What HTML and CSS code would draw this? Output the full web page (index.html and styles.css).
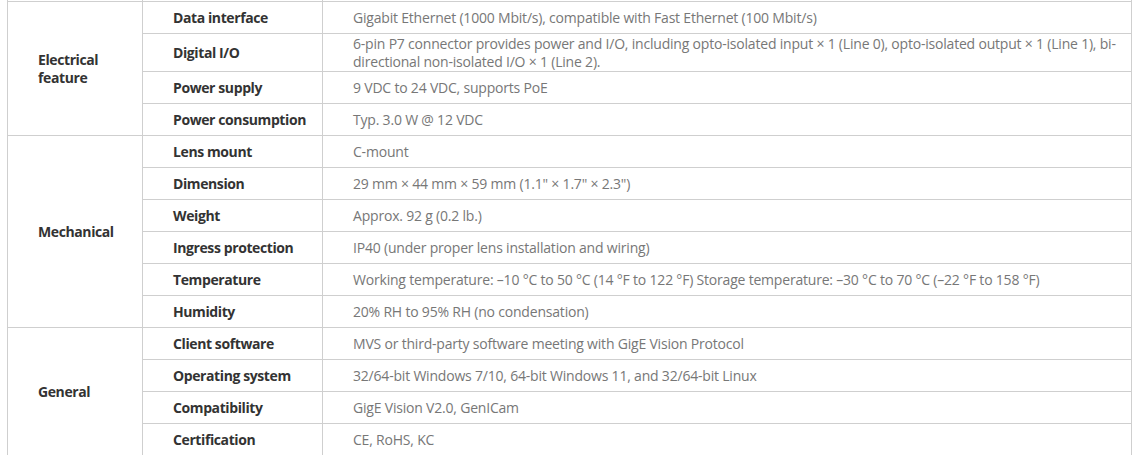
FILE: index.html
```html
<!DOCTYPE html>
<html lang="en">
<head>
<meta charset="utf-8">
<title>Specifications</title>
<link rel="stylesheet" href="styles.css">
</head>
<body>
<div class="spec-wrap">
<table class="spec">
  <colgroup>
    <col class="c-group">
    <col class="c-label">
    <col class="c-value">
  </colgroup>
  <tbody>
    <tr class="prev"><td></td><td></td><td></td></tr>
    <tr><td class="group" rowspan="4">Electrical<br>feature</td><td class="label">Data interface</td><td class="value">Gigabit Ethernet (1000 Mbit/s), compatible with Fast Ethernet (100 Mbit/s)</td></tr>
    <tr><td class="label">Digital I/O</td><td class="value">6-pin P7 connector provides power and I/O, including opto-isolated input × 1 (Line 0), opto-isolated output × 1 (Line 1), bi-directional non-isolated I/O × 1 (Line 2).</td></tr>
    <tr><td class="label">Power supply</td><td class="value">9 VDC to 24 VDC, supports PoE</td></tr>
    <tr><td class="label">Power consumption</td><td class="value">Typ. 3.0 W @ 12 VDC</td></tr>
    <tr><td class="group" rowspan="6">Mechanical</td><td class="label">Lens mount</td><td class="value">C-mount</td></tr>
    <tr><td class="label">Dimension</td><td class="value">29 mm × 44 mm × 59 mm (1.1" × 1.7" × 2.3")</td></tr>
    <tr><td class="label">Weight</td><td class="value">Approx. 92 g (0.2 lb.)</td></tr>
    <tr><td class="label">Ingress protection</td><td class="value">IP40 (under proper lens installation and wiring)</td></tr>
    <tr><td class="label">Temperature</td><td class="value">Working temperature: –10 °C to 50 °C (14 °F to 122 °F) Storage temperature: –30 °C to 70 °C (–22 °F to 158 °F)</td></tr>
    <tr><td class="label">Humidity</td><td class="value">20% RH to 95% RH (no condensation)</td></tr>
    <tr><td class="group" rowspan="4">General</td><td class="label">Client software</td><td class="value">MVS or third-party software meeting with GigE Vision Protocol</td></tr>
    <tr><td class="label">Operating system</td><td class="value">32/64-bit Windows 7/10, 64-bit Windows 11, and 32/64-bit Linux</td></tr>
    <tr><td class="label">Compatibility</td><td class="value">GigE Vision V2.0, GenICam</td></tr>
    <tr><td class="label">Certification</td><td class="value">CE, RoHS, KC</td></tr>
  </tbody>
</table>
</div>
</body>
</html>
```
FILE: styles.css
```css
html, body {
  margin: 0;
  padding: 0;
  background: #fff;
}
body {
  font-family: "Open Sans", "Noto Sans", "Liberation Sans", sans-serif;
  font-size: 14px;
  overflow: hidden;
}
.spec-wrap {
  padding-left: 7px;
  width: 1125px;
}
.spec {
  width: 1125px;
  border-collapse: collapse;
  table-layout: fixed;
  margin-top: -31px;
}
.c-group { width: 135px; }
.c-label { width: 180px; }
.spec td {
  border: 1px solid #cfcfcf;
  padding: 1px 0 0 30px;
  height: 30px;
  line-height: 18px;
  vertical-align: middle;
  box-sizing: border-box;
}
.spec tr { height: 32px; }
.spec .prev td { height: 30px; }
.group, .label {
  font-weight: 700;
  color: #333;
  letter-spacing: -0.4px;
}
.value {
  color: #777;
  letter-spacing: -0.2px;
  padding-right: 2px !important;
}
```
